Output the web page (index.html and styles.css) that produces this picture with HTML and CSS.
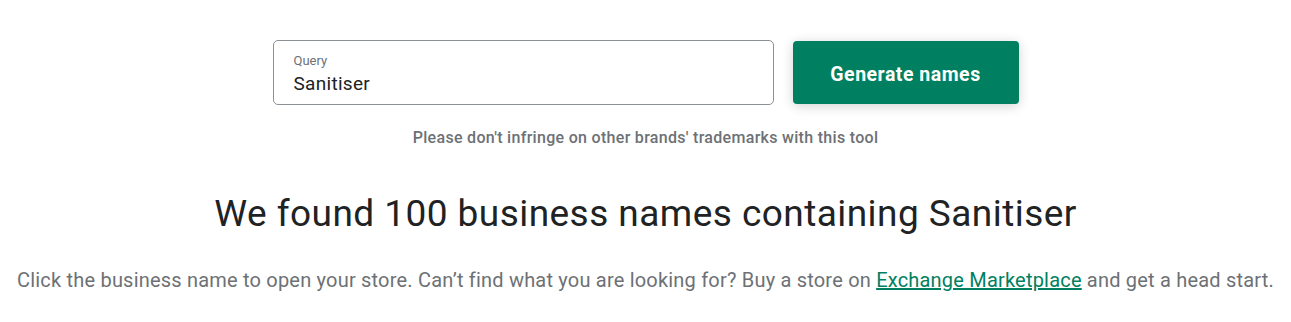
FILE: index.html
```html
<!DOCTYPE html>
<html>
<head>
<meta charset="utf-8">
<link rel="stylesheet" href="styles.css">
</head>
<body>
<main class="page">
  <form class="search">
    <label class="field">
      <span class="field-label">Query</span>
      <span class="field-value">Sanitiser</span>
    </label>
    <button type="button" class="btn">Generate names</button>
  </form>
  <p class="note">Please don't infringe on other brands' trademarks with this tool</p>
  <h1 class="title">We found 100 business names containing Sanitiser</h1>
  <p class="lead">Click the business name to open your store. Can’t find what you are looking for? Buy a store on <a href="#" class="link">Exchange Marketplace</a> and get a head start.</p>
</main>
</body>
</html>
```
FILE: styles.css
```css
html, body { margin: 0; padding: 0; background: #fff; }
body { font-family: Roboto, "Noto Sans", sans-serif; color: #202223; }
.page { display: flex; flex-direction: column; align-items: center; padding-top: 40px; }
.search { display: flex; align-items: center; gap: 19px; margin: 0; }
.field {
  box-sizing: border-box; width: 501px; height: 65px;
  border: 1px solid #8c9196; border-radius: 5px;
  display: flex; flex-direction: column; padding: 12px 20px 0;
}
.field-label { font-size: 13px; color: #6d7175; line-height: 16px; }
.field-value { font-size: 19px; letter-spacing: 0.3px; color: #202223; line-height: 24px; margin-top: 3px; }
.btn {
  box-sizing: border-box; width: 226px; height: 63px; padding: 3px 0 0;
  background: #008060; color: #fff; border: none; border-radius: 4px;
  font-family: Roboto, sans-serif; font-weight: 700; font-size: 19.5px; letter-spacing: 0.5px;
  box-shadow: 0 2px 12px rgba(0,0,0,0.18);
}
.note { margin: 23px 0 0; font-size: 16px; letter-spacing: 0.3px; font-weight: 500; color: #6d7175; line-height: 20px; }
.title { margin: 44px 0 0; font-size: 37px; letter-spacing: 0.45px; font-weight: 400; line-height: 44px; color: #202223; }
.lead { margin: 31px 0 0; font-size: 20px; letter-spacing: 0.2px; font-weight: 400; color: #6d7175; line-height: 26px; }
.link { color: #008060; text-decoration: underline; }
```
